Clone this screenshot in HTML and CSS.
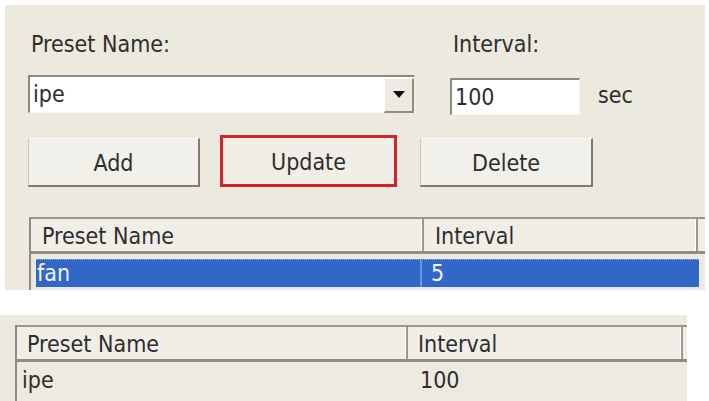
FILE: index.html
```html
<!DOCTYPE html>
<html>
<head>
<meta charset="utf-8">
<link rel="stylesheet" href="styles.css">
</head>
<body>
<div class="panel top-panel">
  <div class="labels">
    <span class="lbl lbl-name">Preset Name:</span>
    <span class="lbl lbl-interval">Interval:</span>
  </div>
  <div class="fields">
    <div class="combo">
      <span class="combo-text">ipe</span>
      <span class="drop"><svg width="12" height="7" viewBox="0 0 12 7"><path d="M0 0 H12 L6 7 Z" fill="#111"/></svg></span>
    </div>
    <div class="input">100</div>
    <span class="unit">sec</span>
  </div>
  <div class="buttons">
    <div class="btn btn-add">Add</div>
    <div class="btn-hl"><div class="btn btn-update">Update</div></div>
    <div class="btn btn-delete">Delete</div>
  </div>
  <div class="table t1">
    <div class="thead">
      <div class="th c1">Preset Name</div>
      <div class="th c2">Interval</div>
      <div class="th c3"></div>
    </div>
    <div class="tbody">
      <div class="row selected">
        <div class="td c1">fan</div>
        <div class="td c2">5</div>
      </div>
    </div>
  </div>
</div>
<div class="panel bottom-panel">
  <div class="table t2">
    <div class="thead">
      <div class="th c1">Preset Name</div>
      <div class="th c2">Interval</div>
      <div class="th c3"></div>
    </div>
    <div class="tbody">
      <div class="row">
        <div class="td c1">ipe</div>
        <div class="td c2">100</div>
      </div>
    </div>
  </div>
</div>
</body>
</html>
```
FILE: styles.css
```css
* { box-sizing: border-box; }
html, body { margin: 0; padding: 0; background: #ffffff; }
body {
  width: 709px;
  height: 401px;
  overflow: hidden;
  font-family: "DejaVu Sans Condensed", "DejaVu Sans", sans-serif;
  font-size: 23px;
  line-height: 27px;
  color: #2e2e2e;
}
.panel { background: #ECE9DF; }
.top-panel {
  margin: 5px 4px 0 5px;
  height: 285px;
  padding-left: 23px;
  display: flex;
  flex-direction: column;
}
.labels {
  display: flex;
  padding-top: 26px;
  height: 53px;
  margin-bottom: 17px;
}
.lbl-name { margin-left: 3px; width: 422px; }
.fields {
  display: flex;
  align-items: flex-start;
  height: 40px;
}
.combo {
  width: 387px;
  height: 38px;
  background: #fff;
  border-top: 2px solid #8b8980;
  border-left: 2px solid #8b8980;
  border-right: 1px solid #f7f6f0;
  border-bottom: 1px solid #f7f6f0;
  display: flex;
  align-items: center;
  justify-content: space-between;
}
.combo-text { padding-left: 3px; }
.drop {
  width: 30px;
  height: 35px;
  margin-top: 1px;
  background: #ECEAE2;
  border-top: 1px solid #fbfaf6;
  border-left: 1px solid #fbfaf6;
  border-right: 2px solid #8e8c84;
  border-bottom: 2px solid #8e8c84;
  display: flex;
  align-items: center;
  justify-content: center;
}
.input {
  margin-left: 35px;
  margin-top: 3px;
  width: 130px;
  height: 37px;
  background: #fff;
  border-top: 2px solid #8b8980;
  border-left: 2px solid #8b8980;
  border-right: 1px solid #f7f6f0;
  border-bottom: 1px solid #f7f6f0;
  padding-left: 3px;
  display: flex;
  align-items: center;
}
.unit {
  margin-left: 18px;
  margin-top: 7px;
}
.buttons {
  display: flex;
  align-items: flex-end;
  margin-top: 20px;
  height: 52px;
}
.btn {
  height: 49px;
  background: #F2F0EA;
  border-top: 1px solid #fdfcf8;
  border-left: 1px solid #c9c6ba;
  border-right: 2px solid #7d7b73;
  border-bottom: 2px solid #7d7b73;
  display: flex;
  align-items: center;
  justify-content: center;
  padding-top: 2px;
}
.btn-add { width: 172px; }
.btn-hl {
  margin-left: 20px;
  width: 177px;
  height: 52px;
  border: 3px solid #D3222A;
}
.btn-update {
  height: 46px;
  border: none;
  background: #F0EEE7;
}
.btn-delete { margin-left: 23px; width: 173px; }

.table { display: flex; flex-direction: column; }
.t1 {
  margin-top: 30px;
  margin-left: 1px;
  flex: 1;
  border-left: 2px solid #8d8b83;
}
.thead {
  display: flex;
  height: 37px;
  background: #F0EEE6;
  border-top: 2px solid #9a988e;
  border-bottom: 3px solid #8f8d84;
}
.th {
  display: flex;
  align-items: center;
  padding-top: 3px;
  border-right: 2px solid #9c9a90;
  box-shadow: inset -1px 0 0 #ffffff;
}
.t1 .th.c1 { width: 393px; padding-left: 11px; }
.t1 .th.c2 { width: 274px; padding-left: 11px; }
.t1 .th.c3 { flex: 1; border-right: none; box-shadow: none; }
.tbody { flex: 1; }
.row { display: flex; }
.t1 .row.selected {
  margin-top: 5px;
  margin-left: 5px;
  width: 663px;
  height: 28px;
  background: #3168C8;
  color: #f2f6ff;
  border-top: 1px dotted #8fb0ea;
}
.t1 .td.c1 { width: 386px; padding-left: 1px; border-right: 2px solid #6d95dc; }
.t1 .td.c2 { flex: 1; padding-left: 9px; }
.td { display: flex; align-items: center; }

.bottom-panel {
  margin-top: 25px;
  width: 687px;
  height: 86px;
  padding-top: 10px;
  padding-left: 15px;
}
.t2 {
  height: 76px;
  border-left: 2px solid #8d8b83;
}
.t2 .th.c1 { width: 391px; padding-left: 10px; }
.t2 .th.c2 { width: 275px; padding-left: 10px; }
.t2 .th.c3 { flex: 1; border-right: none; box-shadow: none; }
.t2 .tbody { background: #EDEAE0; }
.t2 .row { height: 36px; }
.t2 .td.c1 { width: 391px; padding-left: 5px; }
.t2 .td.c2 { padding-left: 12px; }
```
